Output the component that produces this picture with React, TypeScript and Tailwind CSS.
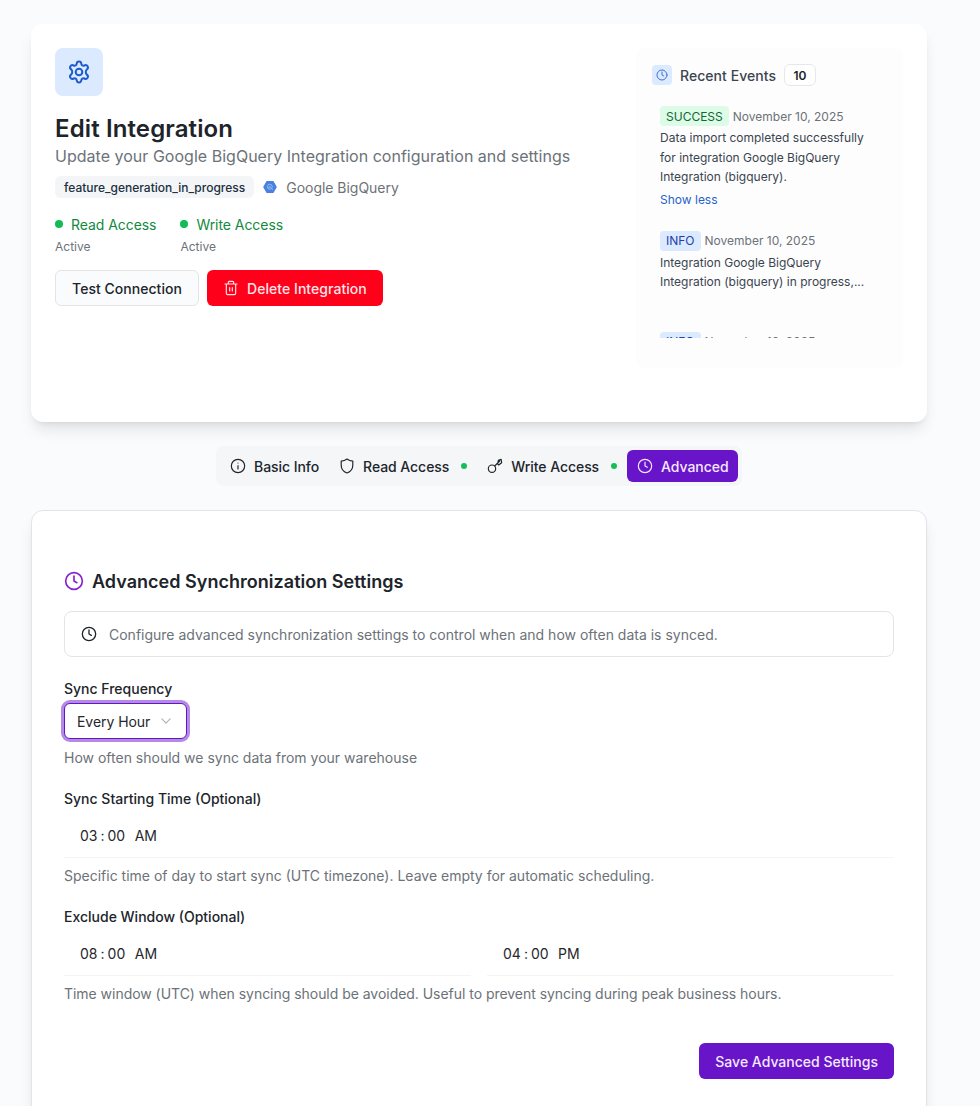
import type { ReactNode } from 'react';

const PATHS = {
  clock: (
    <>
      <circle cx="12" cy="12" r="10" />
      <path d="M12 6v6l3.5 2" />
    </>
  ),
  info: (
    <>
      <circle cx="12" cy="12" r="10" />
      <path d="M12 11.5v5M12 7.5h.01" />
    </>
  ),
  shield: (
    <path d="M12 1.500c-2.600 2-5.500 3-8.700 3.200v6c0 5.500 3 9.400 8.700 11.800 5.700-2.400 8.700-6.300 8.700-11.800v-6c-3.200-.2-6.100-1.200-8.700-3.200z" />
  ),
  key: (
    <>
      <circle cx="7.500" cy="16" r="5.500" />
      <path d="M11.500 12 19 4.500M15.300 8.200l2.200 2.300 4.500-3.500-.8-5-4.200 1.500-.5 3.500" />
    </>
  ),
  trash: (
    <>
      <path d="M3 6h18M8 6V3.500A1.500 1.500 0 0 1 9.500 2h5A1.500 1.500 0 0 1 16 3.500V6M5 6v14a2 2 0 0 0 2 2h10a2 2 0 0 0 2-2V6M10 11.500v5M14 11.500v5" />
    </>
  ),
  chevron: <path d="m5 8.500 7 7 7-7" />,
  gear: (
    <>
      <circle cx="12" cy="12" r="3.300" />
      <path d="M9.700 3.700C9.800 2.300 10.700 1.500 12 1.500s2.200.8 2.300 2.200c.1 1.600 1.600 2.500 3 1.800 1.300-.7 2.600-.4 3.300.7.700 1.200.4 2.300-.7 3.200-1.500 1.200-1.500 4 0 5.200 1.100.9 1.400 2 .7 3.200-.7 1.100-2 1.400-3.300.7-1.400-.7-2.900.2-3 1.800-.1 1.400-1 2.200-2.300 2.200s-2.200-.8-2.300-2.200c-.1-1.600-1.600-2.500-3-1.800-1.300.7-2.600.4-3.300-.7-.7-1.200-.4-2.300.7-3.200 1.500-1.200 1.500-4 0-5.200-1.100-.9-1.400-2-.7-3.200.7-1.100 2-1.400 3.300-.7 1.400.7 2.900-.2 3-1.800z" />
    </>
  ),
};

type IconName = keyof typeof PATHS;

function Icon({ name, className, strokeWidth = 1.75 }: { name: IconName; className: string; strokeWidth?: number }) {
  return (
    <svg
      viewBox="0 0 24 24"
      fill="none"
      stroke="currentColor"
      strokeWidth={strokeWidth}
      strokeLinecap="round"
      strokeLinejoin="round"
      className={className}
    >
      {PATHS[name]}
    </svg>
  );
}

function BigQueryLogo() {
  return (
    <svg viewBox="0 0 24 24" className="h-4 w-4">
      <path
        d="M7.500 4h9L21.200 12l-4.700 8h-9L2.800 12z"
        fill="#4a80e0"
        stroke="#4a80e0"
        strokeWidth="2"
        strokeLinejoin="round"
      />
      <circle cx="11.700" cy="11.700" r="3.700" fill="none" stroke="#a9c4f5" strokeWidth="1.200" />
      <path d="M10.300 12v1.500M11.700 10.500v3M13.100 11.500v2M14.500 14.500l2 2" stroke="#a9c4f5" strokeWidth="1" />
    </svg>
  );
}

function AccessStatus({ label }: { label: string }) {
  return (
    <div>
      <div className="flex items-center gap-2">
        <span className="h-2 w-2 rounded-full bg-[#10bd55]" />
        <span className="pt-0.5 text-sm leading-[18px] tracking-[-0.06px] text-[#128a3e]">{label}</span>
      </div>
      <p className="mt-[5px] text-xs text-[#6c7278]">Active</p>
    </div>
  );
}

function Event({ type, children }: { type: 'SUCCESS' | 'INFO'; children?: ReactNode }) {
  const color =
    type === 'SUCCESS' ? 'bg-[#dcfce7] pt-[3px] pb-px text-[#166534]' : 'bg-[#dbeafe] py-0.5 text-[#1e40af]';
  return (
    <div>
      <div className="flex items-center gap-1 text-xs">
        <span className={`rounded px-1.5 ${color}`}>{type}</span>
        <span className="pt-px text-[#6c7278]">November 10, 2025</span>
      </div>
      {children}
    </div>
  );
}

function Tab({ icon, label, dot, active }: { icon: IconName; label: string; dot?: boolean; active?: boolean }) {
  return (
    <button
      className={`flex h-8 shrink-0 items-center rounded-md px-2.5 text-sm font-medium tracking-[-0.06px] whitespace-nowrap ${
        active ? 'bg-[#6814c8] text-[#f5e9ff]' : 'text-[#20252b]'
      }`}
    >
      <Icon name={icon} className="mr-2 h-4 w-4" />
      <span className="pt-0.5">{label}</span>
      {dot && <span className="ml-3 h-1.5 w-1.5 rounded-full bg-[#18bd5b]" />}
    </button>
  );
}

function TimeField({ hour, period }: { hour: string; period: string }) {
  return (
    <div className="flex h-[45px] flex-1 items-center border-b border-[#f4f4f6] px-4 pt-0.5 text-sm text-[#24272b]">
      <span>{hour}</span>
      <span className="mx-[3px]">:</span>
      <span>00</span>
      <span className="ml-[9.5px]">{period}</span>
    </div>
  );
}

export default function App() {
  return (
    <div className="h-[1106px] overflow-hidden bg-[#fafbfd] pt-6 pr-[53px] pl-[31px] font-[Inter,sans-serif]">
      <section className="flex h-[398px] justify-between rounded-xl bg-white p-6 shadow-[0_10px_15px_-3px_rgb(0_0_0/0.1),0_4px_6px_-4px_rgb(0_0_0/0.1)]">
        <div>
          <div className="flex h-12 w-12 items-center justify-center rounded-lg bg-[#dbeafe] text-[#1d5bcc]">
            <Icon name="gear" className="h-6 w-6" strokeWidth={2} />
          </div>
          <h1 className="mt-[17px] text-2xl font-semibold tracking-[0.12px] text-[#20242a]">Edit Integration</h1>
          <p className="-mt-px text-base leading-6 tracking-[0.02px] text-[#6c7278]">
            Update your Google BigQuery Integration configuration and settings
          </p>
          <div className="mt-2 flex h-[22px] items-center">
            <span className="rounded-md bg-[#f3f5f7] px-[9px] pt-1 pb-0.5 text-xs font-medium text-[#20303f]">
              feature_generation_in_progress
            </span>
            <span className="mr-2 ml-2">
              <BigQueryLogo />
            </span>
            <span className="pt-0.5 text-sm tracking-[-0.03px] text-[#6c7278]">Google BigQuery</span>
          </div>
          <div className="mt-4 flex gap-6">
            <AccessStatus label="Read Access" />
            <AccessStatus label="Write Access" />
          </div>
          <div className="mt-[15px] flex gap-2">
            <button className="h-9 w-36 rounded-md border border-[#e1e5e9] bg-[#fafbfd] pt-0.5 text-sm font-medium tracking-[0.03px] text-[#20242a]">
              Test Connection
            </button>
            <button className="flex h-9 w-44 items-center gap-2 rounded-md bg-[#ff001b] px-4 text-sm font-medium tracking-[0.05px] whitespace-nowrap text-[#ffe4e9]">
              <Icon name="trash" className="h-4 w-4" />
              <span className="pt-0.5">Delete Integration</span>
            </button>
          </div>
        </div>

        <aside className="h-80 w-[267px] rounded-lg bg-[#fdfdfd] px-4 pt-4">
          <div className="flex h-[22px] items-center">
            <span className="flex h-5 w-5 items-center justify-center rounded bg-[#dbeafe] text-[#3f70d0]">
              <Icon name="clock" className="h-3 w-3" strokeWidth={2} />
            </span>
            <span className="ml-2 pt-0.5 text-sm font-medium tracking-[0.05px] text-[#3b4450]">Recent Events</span>
            <span className="ml-2 flex h-[22px] w-8 items-center justify-center rounded-md border border-[#e4e7eb] bg-white pt-px text-xs font-semibold text-[#20242a]">
              10
            </span>
          </div>
          <div className="mt-3 h-[240px] overflow-hidden p-2">
            <Event type="SUCCESS">
              <p className="mt-0.5 text-xs leading-[19.5px] text-[#3b4450]">
                Data import completed successfully for integration Google BigQuery Integration (bigquery).
              </p>
              <button className="mt-[5px] block text-xs text-[#2563cb]">Show less</button>
            </Event>
            <div className="mt-[23px]">
              <Event type="INFO">
                <p className="mt-0.5 text-xs leading-[19.5px] text-[#3b4450]">
                  Integration Google BigQuery
                  <br />
                  Integration (bigquery) in progress,...
                </p>
              </Event>
            </div>
            <div className="mt-10">
              <Event type="INFO" />
            </div>
          </div>
        </aside>
      </section>

      <nav className="mt-6 ml-[185px] flex h-10 w-fit items-center rounded-lg bg-[#f4f6f8] px-1">
        <Tab icon="info" label="Basic Info" />
        <Tab icon="shield" label="Read Access" dot />
        <Tab icon="key" label="Write Access" dot />
        <Tab icon="clock" label="Advanced" active />
      </nav>

      <section className="mt-6 h-[640px] rounded-xl border border-[#e1e5e9] bg-white px-8 pt-[56px] shadow-[0_10px_15px_-3px_rgb(0_0_0/0.1),0_4px_6px_-4px_rgb(0_0_0/0.1)]">
        <h2 className="flex h-7 items-center gap-2 text-lg font-semibold tracking-[0.025px] text-[#20242a]">
          <Icon name="clock" className="h-5 w-5 text-[#8b20ce]" strokeWidth={2} />
          <span className="pt-0.5">Advanced Synchronization Settings</span>
        </h2>
        <div className="mt-4 flex h-[46px] items-center rounded-lg border border-[#e1e5e9] px-4">
          <Icon name="clock" className="h-4 w-4 text-[#20242a]" strokeWidth={2} />
          <span className="ml-3 pt-0.5 text-sm text-[#6c7278]">
            Configure advanced synchronization settings to control when and how often data is synced.
          </span>
        </div>

        <div className="mt-[22px]">
          <label className="block text-sm font-medium text-[#20242a]">Sync Frequency</label>
          <button className="mt-1 flex h-9 w-[123px] items-center rounded-md border border-[#6417c0] bg-white px-3 text-sm tracking-[-0.05px] whitespace-nowrap text-[#24272b] ring-[3px] ring-[#b48ae6]">
            <span className="pt-0.5">Every Hour</span>
            <Icon name="chevron" className="ml-[9px] h-3.5 w-3.5 text-[#aeb1b5]" strokeWidth={2} />
          </button>
          <p className="mt-[9px] text-sm text-[#6c7278]">How often should we sync data from your warehouse</p>
        </div>

        <div className="mt-[21px]">
          <label className="block text-sm font-medium text-[#20242a]">Sync Starting Time (Optional)</label>
          <div className="mt-1 flex">
            <TimeField hour="03" period="AM" />
          </div>
          <p className="mt-2 text-sm text-[#6c7278]">
            Specific time of day to start sync (UTC timezone). Leave empty for automatic scheduling.
          </p>
        </div>

        <div className="mt-[21px]">
          <label className="block text-sm font-medium text-[#20242a]">Exclude Window (Optional)</label>
          <div className="mt-1 flex gap-4">
            <TimeField hour="08" period="AM" />
            <TimeField hour="04" period="PM" />
          </div>
          <p className="mt-2 text-sm tracking-[-0.035px] text-[#6c7278]">
            Time window (UTC) when syncing should be avoided. Useful to prevent syncing during peak business hours.
          </p>
        </div>

        <div className="mt-[39px] flex justify-end">
          <button className="h-9 rounded-md bg-[#6814c8] px-4 pt-0.5 text-sm font-medium text-[#f5e9ff]">
            Save Advanced Settings
          </button>
        </div>
      </section>
    </div>
  );
}
